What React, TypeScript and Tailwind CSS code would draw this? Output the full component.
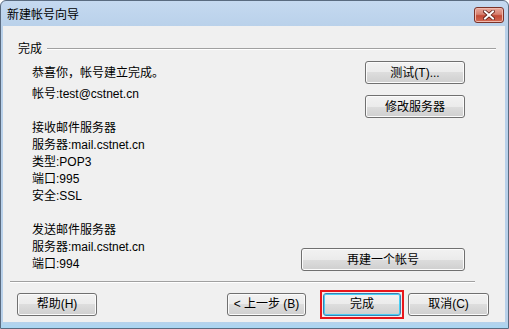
import * as React from "react";
import clsx from "clsx";

const font = "font-['Liberation_Sans','Noto_Sans_CJK_SC',sans-serif]";

function Btn({
  children,
  className,
  focused,
}: {
  children: React.ReactNode;
  className?: string;
  focused?: boolean;
}) {
  return (
    <button
      className={clsx(
        "flex h-[23px] items-center justify-center rounded-[3px] border bg-[linear-gradient(#f2f2f2_0%,#ebebeb_50%,#dddddd_50%,#cfcfcf_100%)] text-[12px] leading-none text-black",
        focused
          ? "border-[#3c7fb1] shadow-[inset_0_0_0_1px_#48cff5]"
          : "border-[#707070] shadow-[inset_0_0_0_1px_#fbfbfb]",
        className
      )}
    >
      {children}
    </button>
  );
}

function EtchedLine({ className }: { className?: string }) {
  return <div className={clsx("h-[2px] border-t border-[#a0a0a0] border-b border-b-white", className)} />;
}

export default function App() {
  return (
    <div className={clsx("h-[329px] w-[509px] bg-white", font)}>
      <div className="flex h-[329px] w-[509px] flex-col rounded-t-[6px] border border-[#5a6b80] bg-[linear-gradient(#c5d9f0_0%,#b9d1ea_26px,#b9d1ea_320px,#a9d6f2_100%)]">
        {/* title bar */}
        <div className="flex h-[25px] items-start justify-between pl-[6px] pr-[4px] pt-[6px]">
          <span className="text-[12px] leading-[16px] text-black">新建帐号向导</span>
          <div className="flex h-[16px] w-[30px] items-center justify-center rounded-[3px] border border-[#7a3228] bg-[linear-gradient(#e8a89c_0%,#d7806f_45%,#c24a36_55%,#d26a53_100%)] shadow-[inset_0_0_0_1px_#f0b9ae]">
            <svg width="12" height="10" viewBox="0 0 12 10">
              <path d="M2 1.5 L10 8.5 M10 1.5 L2 8.5" stroke="#5b1d14" strokeWidth="3.6" strokeLinecap="square" />
              <path d="M2 1.5 L10 8.5 M10 1.5 L2 8.5" stroke="#ffffff" strokeWidth="2" strokeLinecap="square" />
            </svg>
          </div>
        </div>

        {/* client area */}
        <div className="mb-[6px] ml-[2px] mr-[3px] flex h-[296px] flex-col bg-[#f0f0f0] text-[12px] text-black">
          {/* header */}
          <div className="flex items-center pl-[15px] pr-[9px] pt-[15px]">
            <span className="leading-[16px]">完成</span>
            <EtchedLine className="ml-[5px] flex-1" />
          </div>

          {/* body */}
          <div className="flex h-[224px]">
            <div className="flex-1 pl-[29px] pt-[7px]">
              <div className="leading-[18px]">恭喜你，帐号建立完成。</div>
              <div className="mt-[3px] leading-[18px]">帐号:test@cstnet.cn</div>
              <div className="mt-[17px] leading-[17px]">
                <div>接收邮件服务器</div>
                <div>服务器:mail.cstnet.cn</div>
                <div>类型:POP3</div>
                <div>端口:995</div>
                <div>安全:SSL</div>
                <div className="h-[17px]" />
                <div>发送邮件服务器</div>
                <div>服务器:mail.cstnet.cn</div>
                <div>端口:994</div>
              </div>
            </div>
            <div className="flex flex-col items-end pb-[10px] pr-[40px] pt-[4px]">
              <Btn className="w-[100px]">测试(T)...</Btn>
              <Btn className="mt-[11px] w-[100px]">修改服务器</Btn>
              <Btn className="mt-auto w-[164px]">再建一个帐号</Btn>
            </div>
          </div>

          <EtchedLine className="ml-[7px] w-[465px]" />

          {/* bottom buttons */}
          <div className="mt-[8px] flex h-[26px] items-center pl-[14px] pr-[16px]">
            <Btn className="w-[80px]">帮助(H)</Btn>
            <div className="flex-1" />
            <Btn className="w-[79px]">&lt; 上一步 (B)</Btn>
            <div className="ml-[14px] border-2 border-[#e8161b] p-px">
              <Btn focused className="w-[78px]">完成</Btn>
            </div>
            <Btn className="ml-[4px] w-[81px]">取消(C)</Btn>
          </div>
        </div>
      </div>
    </div>
  );
}
